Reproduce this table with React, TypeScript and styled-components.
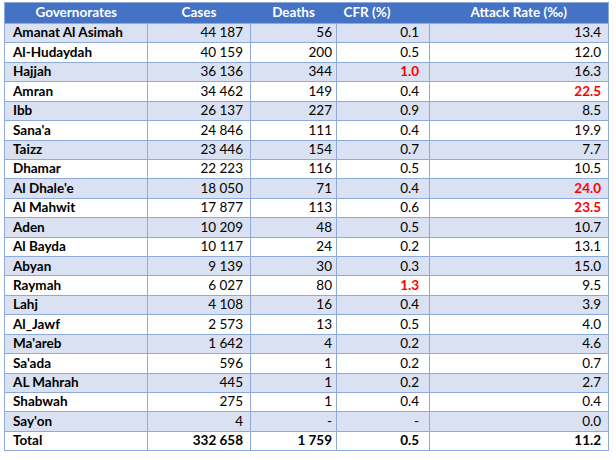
import styled, { createGlobalStyle } from 'styled-components';

interface GovernorateRow {
  name: string;
  cases: string;
  deaths: string;
  cfr: string;
  attackRate: string;
  cfrAlert?: boolean;
  rateAlert?: boolean;
}

const rows: GovernorateRow[] = [
  { name: 'Amanat Al Asimah', cases: '44 187', deaths: '56', cfr: '0.1', attackRate: '13.4' },
  { name: 'Al-Hudaydah', cases: '40 159', deaths: '200', cfr: '0.5', attackRate: '12.0' },
  { name: 'Hajjah', cases: '36 136', deaths: '344', cfr: '1.0', attackRate: '16.3', cfrAlert: true },
  { name: 'Amran', cases: '34 462', deaths: '149', cfr: '0.4', attackRate: '22.5', rateAlert: true },
  { name: 'Ibb', cases: '26 137', deaths: '227', cfr: '0.9', attackRate: '8.5' },
  { name: "Sana'a", cases: '24 846', deaths: '111', cfr: '0.4', attackRate: '19.9' },
  { name: 'Taizz', cases: '23 446', deaths: '154', cfr: '0.7', attackRate: '7.7' },
  { name: 'Dhamar', cases: '22 223', deaths: '116', cfr: '0.5', attackRate: '10.5' },
  { name: "Al Dhale'e", cases: '18 050', deaths: '71', cfr: '0.4', attackRate: '24.0', rateAlert: true },
  { name: 'Al Mahwit', cases: '17 877', deaths: '113', cfr: '0.6', attackRate: '23.5', rateAlert: true },
  { name: 'Aden', cases: '10 209', deaths: '48', cfr: '0.5', attackRate: '10.7' },
  { name: 'Al Bayda', cases: '10 117', deaths: '24', cfr: '0.2', attackRate: '13.1' },
  { name: 'Abyan', cases: '9 139', deaths: '30', cfr: '0.3', attackRate: '15.0' },
  { name: 'Raymah', cases: '6 027', deaths: '80', cfr: '1.3', attackRate: '9.5', cfrAlert: true },
  { name: 'Lahj', cases: '4 108', deaths: '16', cfr: '0.4', attackRate: '3.9' },
  { name: 'Al_Jawf', cases: '2 573', deaths: '13', cfr: '0.5', attackRate: '4.0' },
  { name: "Ma'areb", cases: '1 642', deaths: '4', cfr: '0.2', attackRate: '4.6' },
  { name: "Sa'ada", cases: '596', deaths: '1', cfr: '0.2', attackRate: '0.7' },
  { name: 'AL Mahrah', cases: '445', deaths: '1', cfr: '0.2', attackRate: '2.7' },
  { name: 'Shabwah', cases: '275', deaths: '1', cfr: '0.4', attackRate: '0.4' },
  { name: "Say'on", cases: '4', deaths: '-', cfr: '-', attackRate: '0.0' },
];

const GlobalStyle = createGlobalStyle`
  html, body {
    margin: 0;
    padding: 0;
    background: #ffffff;
  }
  body {
    font-family: Lato, "Liberation Sans", sans-serif;
  }
`;

const Page = styled.div`
  padding: 2px 0 0 4px;
`;

const Table = styled.table`
  width: 604px;
  border-collapse: collapse;
  table-layout: fixed;
  font-size: 13.5px;
  line-height: 1;
  color: #000000;
  border: 1px solid #8eaadb;
`;

const HeadCell = styled.th<{ $align?: 'left' | 'center' }>`
  height: 20px;
  padding: ${(p) => (p.$align === 'left' ? '0 0 0 7px' : '0')};
  background: #4472c4;
  color: #ffffff;
  font-weight: 700;
  text-align: ${(p) => p.$align ?? 'center'};
  white-space: nowrap;
`;

const BodyRow = styled.tr<{ $shaded: boolean }>`
  height: 19.43px;
  background: ${(p) => (p.$shaded ? '#d9e1f2' : '#ffffff')};
`;

const NameCell = styled.td`
  padding: 0 0 0 8px;
  border: 1px solid #8eaadb;
  font-weight: 700;
  text-align: left;
  white-space: nowrap;
`;

const NumCell = styled.td<{ $pad: number; $bold?: boolean; $alert?: boolean }>`
  padding: 0 ${(p) => p.$pad}px 0 0;
  border: 1px solid #8eaadb;
  text-align: right;
  white-space: nowrap;
  font-weight: ${(p) => (p.$bold || p.$alert ? 700 : 400)};
  color: ${(p) => (p.$alert ? '#ff0000' : 'inherit')};
`;

export default function App() {
  return (
    <>
      <GlobalStyle />
      <Page>
        <Table>
          <colgroup>
            <col style={{ width: 143 }} />
            <col style={{ width: 103 }} />
            <col style={{ width: 86 }} />
            <col style={{ width: 93 }} />
            <col style={{ width: 179 }} />
          </colgroup>
          <thead>
            <tr>
              <HeadCell>Governorates</HeadCell>
              <HeadCell>Cases</HeadCell>
              <HeadCell>Deaths</HeadCell>
              <HeadCell $align="left">CFR (%)</HeadCell>
              <HeadCell>Attack Rate (‰)</HeadCell>
            </tr>
          </thead>
          <tbody>
            {rows.map((row, i) => (
              <BodyRow key={row.name} $shaded={i % 2 === 0}>
                <NameCell>{row.name}</NameCell>
                <NumCell $pad={7}>{row.cases}</NumCell>
                <NumCell $pad={4}>{row.deaths}</NumCell>
                <NumCell $pad={10} $alert={row.cfrAlert}>
                  {row.cfr}
                </NumCell>
                <NumCell $pad={7} $alert={row.rateAlert}>
                  {row.attackRate}
                </NumCell>
              </BodyRow>
            ))}
            <BodyRow $shaded={false}>
              <NameCell>Total</NameCell>
              <NumCell $pad={7} $bold>
                332 658
              </NumCell>
              <NumCell $pad={4} $bold>
                1 759
              </NumCell>
              <NumCell $pad={10} $bold>
                0.5
              </NumCell>
              <NumCell $pad={7} $bold>
                11.2
              </NumCell>
            </BodyRow>
          </tbody>
        </Table>
      </Page>
    </>
  );
}
